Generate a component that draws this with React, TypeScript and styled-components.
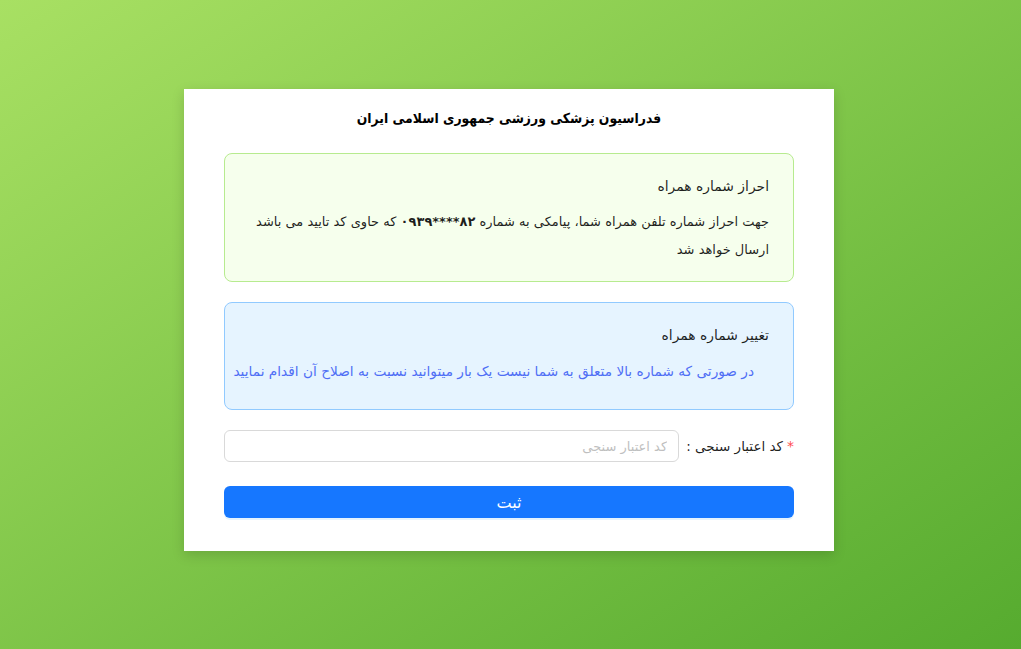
import React from "react";
import styled, { createGlobalStyle } from "styled-components";

const Global = createGlobalStyle`
  html, body { margin: 0; padding: 0; }
  body {
    font-family: "DejaVu Sans", "Noto Sans", sans-serif;
    direction: rtl;
  }
  * { box-sizing: border-box; }
`;

const Page = styled.div`
  min-height: 100vh;
  width: 100%;
  background: linear-gradient(to bottom right, #a8e063, #56ab2f);
  display: flex;
  align-items: flex-start;
  justify-content: center;
  padding-top: 89px;
  padding-right: 3px;
`;

const Card = styled.div`
  width: 650px;
  background: #fff;
  padding: 18px 40px 33px;
  box-shadow: 0 4px 12px rgba(0, 0, 0, 0.15);
  display: flex;
  flex-direction: column;
`;

const Title = styled.h1`
  margin: 0 0 24px;
  text-align: center;
  font-family: "DejaVu Sans Condensed", "DejaVu Sans", sans-serif;
  font-stretch: condensed;
  font-size: 13.8px;
  font-weight: bold;
  line-height: 22px;
  color: #000;
`;

const Alert = styled.div<{ $tone: "success" | "info" }>`
  border: 1px solid ${(p) => (p.$tone === "success" ? "#b7eb8f" : "#91caff")};
  background: ${(p) => (p.$tone === "success" ? "#f6ffed" : "#e6f4ff")};
  border-radius: 8px;
  padding: 20px 24px 17px;
  margin-bottom: 20px;
`;

const AlertTitle = styled.div`
  font-size: 13.9px;
  line-height: 24px;
  color: rgba(0, 0, 0, 0.88);
  margin-bottom: 10px;
`;

const Desc = styled.div<{ $blue?: boolean }>`
  font-size: ${(p) => (p.$blue ? "13.7px" : "13px")};
  line-height: 28px;
  color: ${(p) => (p.$blue ? "#4f6ef5" : "rgba(0, 0, 0, 0.88)")};
  margin-top: ${(p) => (p.$blue ? "2px" : "0")};
  margin-bottom: ${(p) => (p.$blue ? "7px" : "0")};
  margin-inline-end: ${(p) => (p.$blue ? "-22px" : "0")};
  padding-inline-start: ${(p) => (p.$blue ? "15px" : "0")};
`;

const Num = styled.span`
  font-weight: bold;
  unicode-bidi: isolate;
  direction: ltr;
`;

const Field = styled.div`
  display: flex;
  align-items: center;
  gap: 7px;
  margin-bottom: 24px;
`;

const Label = styled.label`
  font-size: 13.5px;
  color: rgba(0, 0, 0, 0.88);
  white-space: nowrap;
  display: flex;
  align-items: center;
  gap: 4px;
`;

const Star = styled.span`
  color: #ff4d4f;
  font-size: 14px;
`;

const Input = styled.input`
  flex: 1;
  height: 32px;
  border: 1px solid #d9d9d9;
  border-radius: 6px;
  padding: 4px 11px;
  font-family: "DejaVu Sans", sans-serif;
  font-size: 13px;
  direction: rtl;
  outline: none;
  &::placeholder { color: #bfbfbf; }
`;

const Button = styled.button`
  height: 32px;
  width: 100%;
  border: none;
  border-radius: 6px;
  background: #1677ff;
  color: #fff;
  font-family: "DejaVu Sans", sans-serif;
  font-size: 16px;
  cursor: pointer;
  box-shadow: 0 2px 0 rgba(5, 145, 255, 0.1);
`;

export default function App() {
  return (
    <>
      <Global />
      <Page>
        <Card>
          <Title>فدراسیون پزشکی ورزشی جمهوری اسلامی ایران</Title>
          <Alert $tone="success">
            <AlertTitle>احراز شماره همراه</AlertTitle>
            <Desc>
              جهت احراز شماره تلفن همراه شما، پیامکی به شماره <Num>۰۹۳۹****۸۲</Num> که حاوی کد تایید می باشد ارسال خواهد شد
            </Desc>
          </Alert>
          <Alert $tone="info">
            <AlertTitle>تغییر شماره همراه</AlertTitle>
            <Desc $blue>
              در صورتی که شماره بالا متعلق به شما نیست یک بار میتوانید نسبت به اصلاح آن اقدام نمایید
            </Desc>
          </Alert>
          <Field>
            <Label>
              <Star>*</Star>
              کد اعتبار سنجی :
            </Label>
            <Input placeholder="کد اعتبار سنجی" />
          </Field>
          <Button>ثبت</Button>
        </Card>
      </Page>
    </>
  );
}
